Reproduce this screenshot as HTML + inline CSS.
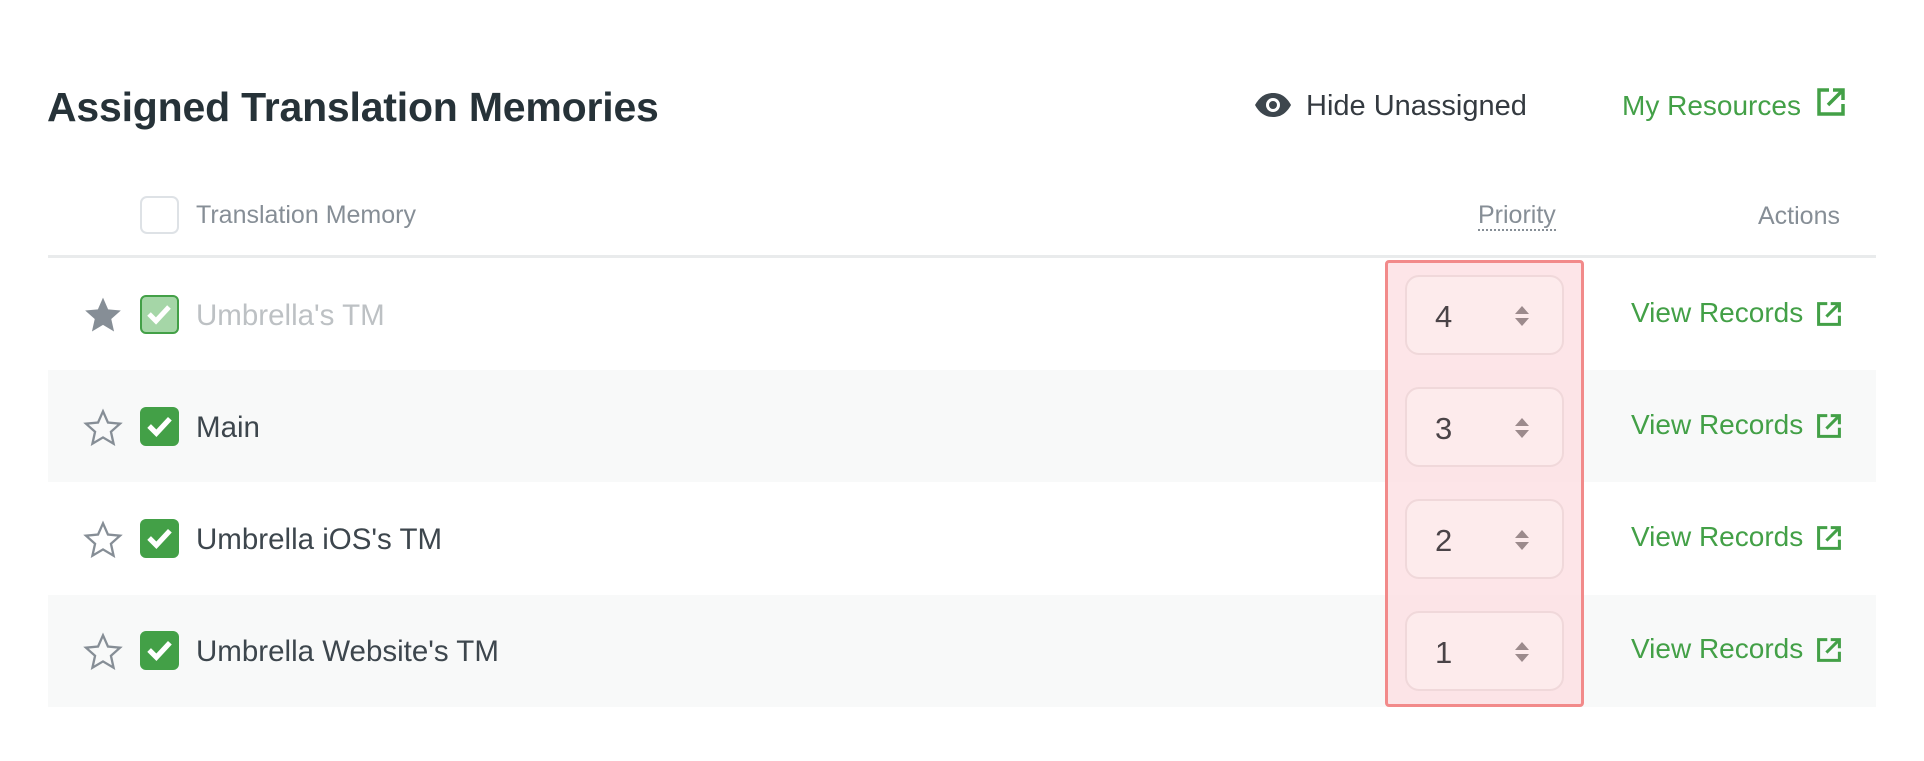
<!DOCTYPE html>
<html><head><meta charset="utf-8"><style>
*{margin:0;padding:0;box-sizing:border-box}
body{width:1924px;height:761px;background:#fff;font-family:"Liberation Sans",sans-serif;position:relative;overflow:hidden;color:#343a40}
.a{position:absolute;white-space:nowrap}
.title{left:47px;top:84px;font-size:41px;font-weight:bold;color:#263238;letter-spacing:-0.2px}
.hdr{font-size:25px;color:#868e96}
.row{position:absolute;left:48px;width:1828px;height:112px}
.alt{background:#f8f9f9}
.cb{position:absolute;left:140px;width:39px;height:39px;border-radius:6px;background:#43a047}
.cb svg{position:absolute;left:6px;top:7px}
.name{left:196px;font-size:29.5px;color:#3d464d}
.vr{left:1631px;font-size:28px;color:#43a047}
.box{position:absolute;left:1405px;width:159px;height:80px;border:2px solid #f0d8da;border-radius:14px;background:#fdebec}
.num{position:absolute;left:1435px;font-size:31px;color:#4a4347}
</style></head><body>
<div class="a title">Assigned Translation Memories</div>
<svg class="a" style="left:1254px;top:92px" width="38" height="26" viewBox="0 0 38 26"><path d="M1 13C6 4 12 1 19 1s13 3 18 12c-5 9-11 12-18 12S6 22 1 13z" fill="#3d464d"/><circle cx="19" cy="13" r="7" fill="#fff"/><circle cx="19" cy="13" r="4" fill="#3d464d"/></svg>
<div class="a" style="left:1306px;top:90px;font-size:29px;color:#343a40">Hide Unassigned</div>
<div class="a" style="left:1622px;top:90px;font-size:28px;color:#43a047">My Resources</div>
<svg class="a" style="left:1816px;top:87px" width="30" height="30" viewBox="0 0 30 30"><path d="M13 3H3v24h24V17" fill="none" stroke="#43a047" stroke-width="3.5"/><path d="M12 18L26 4M17 3h10v10" fill="none" stroke="#43a047" stroke-width="3.5"/></svg>

<div class="a" style="left:140px;top:196px;width:39px;height:38px;border:2px solid #dee2e6;border-radius:7px"></div>
<div class="a hdr" style="left:196px;top:201px">Translation Memory</div>
<div class="a hdr" style="left:1478px;top:201px;border-bottom:2px dotted #868e96;line-height:28px">Priority</div>
<div class="a hdr" style="left:1758px;top:202px">Actions</div>
<div class="a" style="left:48px;top:255px;width:1828px;height:3px;background:#e9ebec"></div>

<div class="row" style="top:258px"></div>
<div class="row alt" style="top:370px"></div>
<div class="row" style="top:482px"></div>
<div class="row alt" style="top:595px"></div>

<div class="a" style="left:1385px;top:260px;width:199px;height:447px;border:3px solid #f28a8a;border-radius:4px;background:rgba(253,225,228,0.85)"></div>

<svg class="a" style="left:83px;top:296px" width="40" height="38" viewBox="0 0 24 23"><path d="M12 1l3.1 7.1 7.7.7-5.8 5.1 1.7 7.6L12 17.5 5.3 21.5 7 13.9 1.2 8.8l7.7-.7z" fill="#868e96"/></svg>
<div class="cb" style="top:295px;background:#a5d6a7;border:2px solid #43a047"><svg width="26" height="22" viewBox="0 0 26 22" style="left:4px;top:6px"><path d="M3 11l7 7L23 4" fill="none" stroke="#fff" stroke-width="5"/></svg></div>
<div class="a name" style="top:299px;color:#bdc1c4">Umbrella's TM</div>
<svg class="a" style="left:83px;top:408px" width="40" height="38" viewBox="0 0 24 23"><path d="M12 2l3 6.8 7.3.7-5.5 4.9 1.6 7.2L12 17.8 5.6 21.6l1.6-7.2L1.7 9.5 9 8.8z" fill="none" stroke="#868e96" stroke-width="1.4"/></svg>
<svg class="a" style="left:83px;top:520px" width="40" height="38" viewBox="0 0 24 23"><path d="M12 2l3 6.8 7.3.7-5.5 4.9 1.6 7.2L12 17.8 5.6 21.6l1.6-7.2L1.7 9.5 9 8.8z" fill="none" stroke="#868e96" stroke-width="1.4"/></svg>
<svg class="a" style="left:83px;top:632px" width="40" height="38" viewBox="0 0 24 23"><path d="M12 2l3 6.8 7.3.7-5.5 4.9 1.6 7.2L12 17.8 5.6 21.6l1.6-7.2L1.7 9.5 9 8.8z" fill="none" stroke="#868e96" stroke-width="1.4"/></svg>
<div class="cb" style="top:407px"><svg width="27" height="24" viewBox="0 0 26 22"><path d="M3 11l7 7L23 4" fill="none" stroke="#fff" stroke-width="5"/></svg></div>
<div class="cb" style="top:519px"><svg width="27" height="24" viewBox="0 0 26 22"><path d="M3 11l7 7L23 4" fill="none" stroke="#fff" stroke-width="5"/></svg></div>
<div class="cb" style="top:631px"><svg width="27" height="24" viewBox="0 0 26 22"><path d="M3 11l7 7L23 4" fill="none" stroke="#fff" stroke-width="5"/></svg></div>
<div class="a name" style="top:411px">Main</div>
<div class="a name" style="top:523px">Umbrella iOS's TM</div>
<div class="a name" style="top:635px">Umbrella Website's TM</div>

<div class="box" style="top:275px"></div><div class="num" style="top:299px">4</div>
<div class="box" style="top:387px"></div><div class="num" style="top:411px">3</div>
<div class="box" style="top:499px"></div><div class="num" style="top:523px">2</div>
<div class="box" style="top:611px"></div><div class="num" style="top:635px">1</div>
<svg class="a" style="left:1514px;top:305px" width="16" height="22" viewBox="0 0 16 22"><path d="M8 1l7 8H1zM8 21l7-8H1z" fill="#9c8a8c"/></svg>
<svg class="a" style="left:1514px;top:417px" width="16" height="22" viewBox="0 0 16 22"><path d="M8 1l7 8H1zM8 21l7-8H1z" fill="#9c8a8c"/></svg>
<svg class="a" style="left:1514px;top:529px" width="16" height="22" viewBox="0 0 16 22"><path d="M8 1l7 8H1zM8 21l7-8H1z" fill="#9c8a8c"/></svg>
<svg class="a" style="left:1514px;top:641px" width="16" height="22" viewBox="0 0 16 22"><path d="M8 1l7 8H1zM8 21l7-8H1z" fill="#9c8a8c"/></svg>

<div class="a vr" style="top:297px">View Records</div>
<div class="a vr" style="top:409px">View Records</div>
<div class="a vr" style="top:521px">View Records</div>
<div class="a vr" style="top:633px">View Records</div>
<svg class="a" style="left:1816px;top:301px" width="26" height="26" viewBox="0 0 30 30"><path d="M13 3H3v24h24V17" fill="none" stroke="#43a047" stroke-width="3.5"/><path d="M12 18L26 4M17 3h10v10" fill="none" stroke="#43a047" stroke-width="3.5"/></svg>
<svg class="a" style="left:1816px;top:413px" width="26" height="26" viewBox="0 0 30 30"><path d="M13 3H3v24h24V17" fill="none" stroke="#43a047" stroke-width="3.5"/><path d="M12 18L26 4M17 3h10v10" fill="none" stroke="#43a047" stroke-width="3.5"/></svg>
<svg class="a" style="left:1816px;top:525px" width="26" height="26" viewBox="0 0 30 30"><path d="M13 3H3v24h24V17" fill="none" stroke="#43a047" stroke-width="3.5"/><path d="M12 18L26 4M17 3h10v10" fill="none" stroke="#43a047" stroke-width="3.5"/></svg>
<svg class="a" style="left:1816px;top:637px" width="26" height="26" viewBox="0 0 30 30"><path d="M13 3H3v24h24V17" fill="none" stroke="#43a047" stroke-width="3.5"/><path d="M12 18L26 4M17 3h10v10" fill="none" stroke="#43a047" stroke-width="3.5"/></svg>
</body></html>
